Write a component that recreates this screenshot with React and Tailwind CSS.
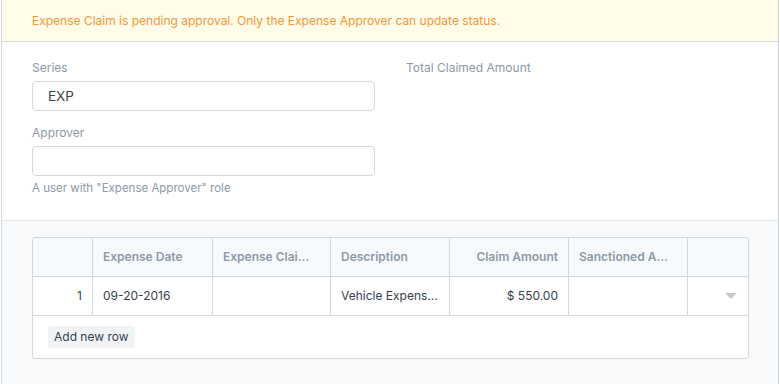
import React from "react";

function Caret() {
  return (
    <svg width="12" height="6" viewBox="0 0 12 6">
      <path d="M0 0 L12 0 L6 6 Z" fill="#c4cad0" />
    </svg>
  );
}

export default function App() {
  const cols = "grid grid-cols-[60px_120px_118px_119px_119px_119px_1fr] whitespace-nowrap";
  return (
    <div className="w-[778px] h-[384px] ml-px border-x border-[#d1d8dd] flex flex-col font-['Inter','Liberation_Sans',sans-serif] text-[#36414c] antialiased">
      <div className="h-[42px] shrink-0 border-b border-[#d1d8dd] bg-[#fffce8] flex items-center px-[30px] text-[12px] text-[#f4963c]">
        Expense Claim is pending approval. Only the Expense Approver can update status.
      </div>
      <div className="h-[179px] shrink-0 border-b border-[#e4e9ec] bg-white px-[30px] pt-[17px] flex gap-[31px]">
        <div className="w-[343px] flex flex-col">
          <div className="h-[18px] leading-[18px] text-[12px] text-[#8d99a6] mb-[4px]">Series</div>
          <div className="h-[30px] border border-[#d1d8dd] rounded-[4px] px-[15px] flex items-center text-[13.5px] text-[#36414c]">EXP</div>
          <div className="h-[18px] leading-[18px] text-[12px] text-[#8d99a6] mt-[13px] mb-[4px]">Approver</div>
          <div className="h-[30px] border border-[#d1d8dd] rounded-[4px]"></div>
          <div className="h-[18px] leading-[18px] text-[11.5px] text-[#8d99a6] mt-[3px]">A user with "Expense Approver" role</div>
        </div>
        <div className="flex-1">
          <div className="h-[18px] leading-[18px] text-[12px] text-[#8d99a6]">Total Claimed Amount</div>
        </div>
      </div>
      <div className="flex-1 bg-[#f7f9fb] pt-[16px] px-[30px]">
        <div className="w-[717px] border border-[#d1d8dd] rounded-[3px] bg-white overflow-hidden">
          <div className={`${cols} h-[39px] bg-[#f7fafc] border-b border-[#d1d8dd] text-[12px] font-semibold text-[#8d99a6]`}>
            <div className="border-r border-[#d1d8dd]"></div>
            <div className="border-r border-[#d1d8dd] px-[10px] flex items-center">Expense Date</div>
            <div className="border-r border-[#d1d8dd] px-[10px] flex items-center">Expense Clai...</div>
            <div className="border-r border-[#d1d8dd] px-[10px] flex items-center">Description</div>
            <div className="border-r border-[#d1d8dd] px-[10px] flex items-center justify-end">Claim Amount</div>
            <div className="border-r border-[#d1d8dd] px-[10px] flex items-center">Sanctioned A...</div>
            <div></div>
          </div>
          <div className={`${cols} h-[39px] border-b border-[#d1d8dd] text-[12px] text-[#36414c]`}>
            <div className="border-r border-[#d1d8dd] px-[10px] flex items-center justify-end">1</div>
            <div className="border-r border-[#d1d8dd] px-[10px] flex items-center">09-20-2016</div>
            <div className="border-r border-[#d1d8dd]"></div>
            <div className="border-r border-[#d1d8dd] px-[10px] flex items-center">Vehicle Expens...</div>
            <div className="border-r border-[#d1d8dd] px-[10px] flex items-center justify-end">$ 550.00</div>
            <div className="border-r border-[#d1d8dd]"></div>
            <div className="flex items-center justify-end pr-[11px]"><Caret /></div>
          </div>
          <div className="h-[42px] px-[15px] flex items-center">
            <div className="h-[22px] px-[6px] rounded-[3px] bg-[#f0f4f7] text-[12px] text-[#36414c] flex items-center">Add new row</div>
          </div>
        </div>
      </div>
    </div>
  );
}
